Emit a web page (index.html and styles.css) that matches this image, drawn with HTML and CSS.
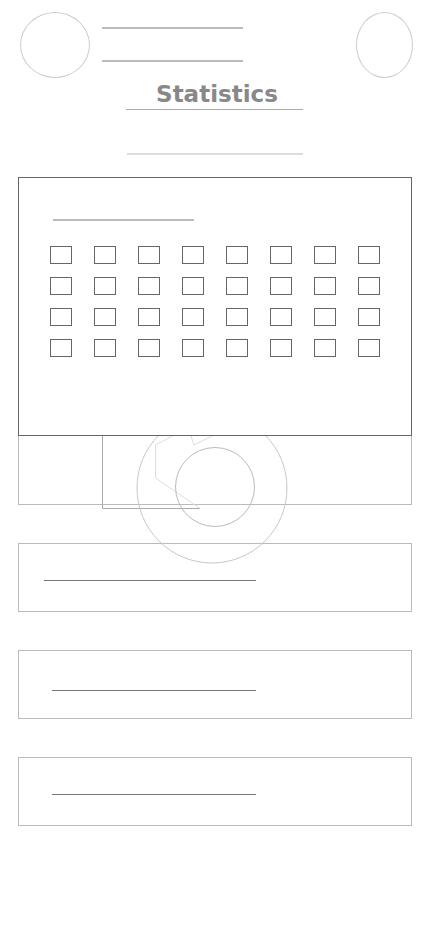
FILE: index.html
```html
<html>
<head><link rel="stylesheet" href="styles.css"></head>
<body>

  <div class="page">

    <div class="header">
      <div class="avatar"></div>
      <div class="lines">
        <div class="bar"></div>
        <div class="bar"></div>
      </div>
      <div class="avatar small"></div>
    </div>

    <h1 class="title">Statistics</h1>
    <div class="rule"></div>
    <div class="rule light"></div>

    <div class="card main">
      <div class="bar label"></div>
      <div class="grid">
        <div class="cell"></div><div class="cell"></div><div class="cell"></div><div class="cell"></div>
        <div class="cell"></div><div class="cell"></div><div class="cell"></div><div class="cell"></div>
        <div class="cell"></div><div class="cell"></div><div class="cell"></div><div class="cell"></div>
        <div class="cell"></div><div class="cell"></div><div class="cell"></div><div class="cell"></div>
        <div class="cell"></div><div class="cell"></div><div class="cell"></div><div class="cell"></div>
        <div class="cell"></div><div class="cell"></div><div class="cell"></div><div class="cell"></div>
        <div class="cell"></div><div class="cell"></div><div class="cell"></div><div class="cell"></div>
        <div class="cell"></div><div class="cell"></div><div class="cell"></div><div class="cell"></div>
      </div>
    </div>

    <div class="card first"></div>

    <div class="card row">
      <div class="stroke wide"></div>
    </div>

    <div class="card row">
      <div class="stroke low"></div>
    </div>

    <div class="card row">
      <div class="stroke"></div>
    </div>

    <svg class="deco" width="430" height="180" viewBox="0 400 430 180">
      <path d="M102.5 430 V508.5 H200" fill="none" stroke="#aaa" stroke-width="1"/>
      <path d="M200 508.5 L155.5 478 V445 L178 433" fill="none" stroke="#ddd" stroke-width="1"/>
      <path d="M189 430 L194 445 L214 435" fill="none" stroke="#ddd" stroke-width="1"/>
      <circle cx="212" cy="488" r="75" fill="none" stroke="#c8c8c8" stroke-width="1"/>
      <circle cx="215" cy="487" r="39.5" fill="none" stroke="#bbb" stroke-width="1"/>
    </svg>

  </div>

</body>
</html>
```

FILE: styles.css
```css
html, body
{
  margin: 0;
  background: #fff;
}

.page
{
  position: relative;
  width: 430px;
  min-height: 932px;
  font-family: "DejaVu Sans", sans-serif;
}

.header
{
  display: flex;
  padding: 12px 17px 0 20px;
  height: 65px;
}

.avatar
{
  width: 70px;
  height: 66px;
  box-sizing: border-box;
  border: 1px solid #ccc;
  border-radius: 50%;
}

.avatar.small
{
  width: 57px;
  margin-left: auto;
}

.lines
{
  width: 141px;
  margin-left: 12px;
  padding-top: 15px;
}

.bar
{
  height: 2px;
  background: #bbb;
}

.lines .bar + .bar { margin-top: 31px; }

.title
{
  margin: 4px 0 0 4px;
  font-size: 23px;
  font-weight: bold;
  line-height: 27px;
  color: #888;
  text-align: center;
}

.rule
{
  width: 177px;
  height: 1px;
  margin: 1px 0 0 126px;
  background: #aaa;
}

.rule.light
{
  width: 176px;
  height: 2px;
  margin: 43px 0 0 127px;
  background: #ddd;
}

.card
{
  margin: 38px 18px 0 18px;
  height: 69px;
  box-sizing: border-box;
  border: 1px solid #bbb;
}

.card.main
{
  position: relative;
  z-index: 2;
  margin-top: 22px;
  height: 259px;
  padding-top: 41px;
  border-color: #666;
  background: #fff;
}

.label
{
  width: 141px;
  margin-left: 34px;
}

.grid
{
  display: grid;
  grid-template-columns: repeat(8, 22px);
  grid-auto-rows: 18px;
  column-gap: 22px;
  row-gap: 13px;
  margin: 25px 0 0 31px;
}

.cell
{
  box-sizing: border-box;
  border: 1px solid #666;
}

.card.first
{
  margin-top: -1px;
  height: 70px;
}

.stroke
{
  width: 204px;
  height: 1px;
  margin: 36px 0 0 33px;
  background: #777;
}

.stroke.wide
{
  width: 212px;
  margin-left: 25px;
}

.stroke.low { margin-top: 39px; }

.deco
{
  position: absolute;
  left: 0;
  top: 400px;
  z-index: 1;
  pointer-events: none;
}
```
